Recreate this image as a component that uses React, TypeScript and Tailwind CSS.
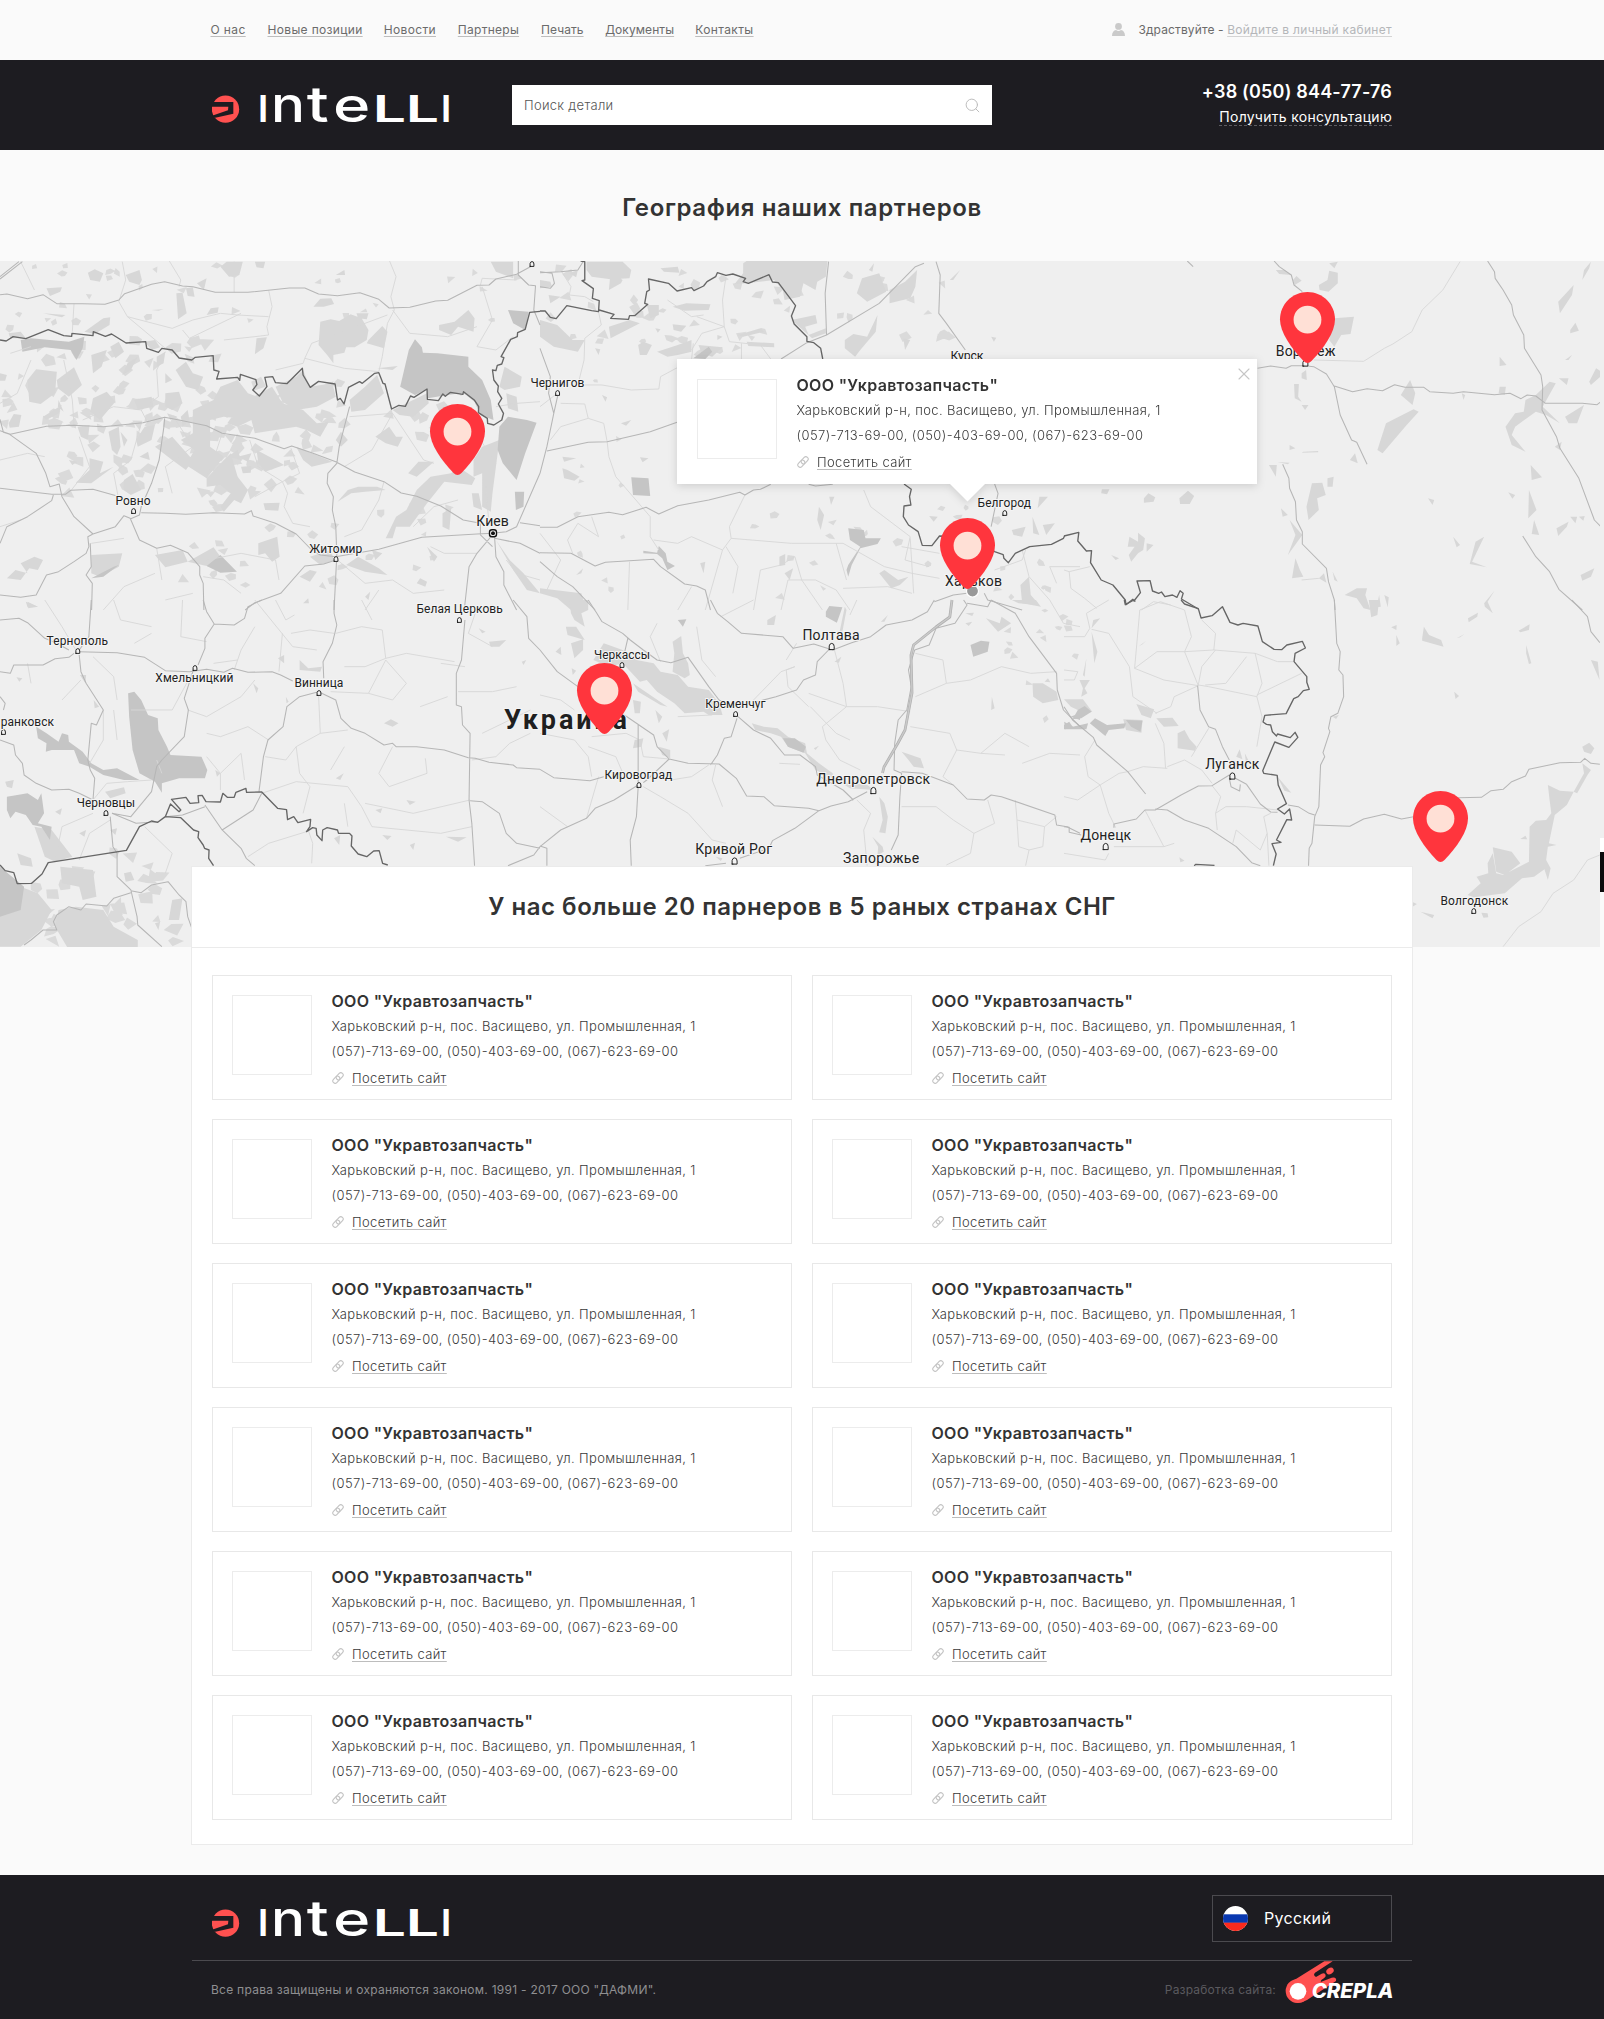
import { Search, X } from "lucide-react";

/* ------------------------------------------------------------------ */
/* Data                                                                */
/* ------------------------------------------------------------------ */

const navItems = [
  { label: "О нас", cls: "tracking-[0.39px] mr-[21.8px]" },
  { label: "Новые позиции", cls: "tracking-[0.34px] mr-[21.2px]" },
  { label: "Новости", cls: "tracking-[0.33px] mr-[21.8px]" },
  { label: "Партнеры", cls: "tracking-[0.28px] mr-[22px]" },
  { label: "Печать", cls: "tracking-[0.05px] mr-[21.6px]" },
  { label: "Документы", cls: "tracking-[0.08px] mr-[21.1px]" },
  { label: "Контакты", cls: "tracking-[0.38px]" },
];

const partner = {
  name: 'ООО "Укравтозапчасть"',
  address: "Харьковский р-н, пос. Васищево, ул. Промышленная, 1",
  phones: "(057)-713-69-00, (050)-403-69-00, (067)-623-69-00",
};
const partners = Array.from({ length: 12 }, () => partner);

interface Tile {
  x: number;
  y: number;
  light: string;
  dark: string;
  thin: string;
  road: string;
  border: string;
}

/* Each tile is digitised on its own grid and scaled into the map. */
const tiles: Tile[] = [
  {
    x: 0,
    y: 0,
    light:
      "M930,185 960,178 985,183 1018,163 1050,175 1070,210 1065,240 1030,262 1005,262 1000,278 968,285 968,310 950,285 925,255z M1070,240 1110,198 1125,215 1115,265 1065,250z M910,140 930,116 962,115 970,132 940,140z M745,235 775,232 765,265 740,283z M512,100 530,98 542,160 517,178z M600,165 612,145 635,142 632,158z M640,20 658,5 705,5 695,45 665,50z M740,5 770,5 765,25 745,22z M135,85 180,82 175,95 145,108z M255,38 275,28 300,40 290,65 262,60z M365,45 405,30 412,60 405,75 375,65z M540,85 560,82 565,110 545,108z M572,70 600,55 592,90z M245,215 300,175 320,172 318,195 275,222z M1275,195 1320,185 1360,150 1378,175 1375,215 1330,200 1310,225 1275,210z M1425,5 1490,5 1490,55 1440,35z M25,220 60,215 75,235 30,235z M80,360 105,328 165,335 160,400 118,432 85,425z M165,360 215,322 238,375 200,410 168,385z M265,285 310,270 295,320 270,340z M320,260 345,245 360,275 335,295z M370,310 400,290 380,330 355,345z M270,415 310,395 335,425 290,480 262,455z M25,490 40,462 62,465 55,500 28,503z M125,470 180,435 170,460 135,480z M315,515 345,500 350,560 340,585 325,570z M395,540 420,500 450,495 440,540 400,560z M480,400 520,395 530,430 500,450 480,440z M510,330 540,305 560,340 590,350 575,390 540,380z M455,290 480,275 475,310 455,320z M560,450 620,420 640,380 690,360 720,400 760,415 740,455 690,475 650,470 610,480 610,560 650,590 600,655 540,615 565,570 525,540 560,520z M700,430 790,380 820,430 880,450 920,490 955,485 930,530 890,510 860,500 800,510 740,520 730,480 690,500 660,490z M800,380 860,350 880,330 900,380 965,370 975,410 920,440 860,450 820,425z M1015,420 1060,380 1095,345 1115,400 1060,450 1020,455z M1140,450 1240,400 1245,430 1200,470 1160,465z M860,560 930,590 965,605 905,620 880,600z M690,590 730,580 720,605z M745,570 800,600 825,615 770,635 750,610z M650,600 670,580 690,650 720,690 700,730 680,720 650,755 640,740 670,700 640,675 600,680 600,655z M260,595 300,605 290,640 330,620 265,670 220,668 260,630z M360,660 385,642 410,690 380,705 358,690z M975,540 990,515 1010,540 990,560z M1090,530 1130,500 1150,530 1170,530 1155,560 1120,550z M980,725 1010,690 1040,680 1095,680 1120,690 1060,695 1020,700z M765,730 812,728 808,752 770,750z M1120,835 1150,770 1180,750 1210,690 1250,650 1310,640 1330,620 1380,655 1370,675 1290,665 1240,730 1190,800 1150,800 1140,835z M1185,640 1215,605 1260,605 1210,650z M1375,600 1400,560 1450,540 1440,620 1430,700 1425,755 1400,740 1400,640 1375,650z M1285,760 1310,745 1305,810 1285,800z M1370,700 1390,700 1400,750 1375,740z M750,850 805,830 812,890 790,905 770,880 750,885z M265,885 355,880 345,920 290,950 265,940z M450,885 530,870 545,905 480,922z M545,905 620,862 640,890 610,920z M20,955 45,930 80,940 60,910 100,890 125,900 110,930 85,925 60,960z M900,890 960,870 970,900 930,915z M1005,915 1040,890 1100,925 1125,945 1060,935z M1080,870 1110,880 1090,900z M870,950 900,930 920,935 900,965z M1210,970 1220,955 1240,965 1235,980z M1440,840 1480,900 1520,940 1568,1000 1530,990 1490,930z M1450,380 1465,320 1515,350 1510,380 1465,390z M1470,400 1500,410 1505,455 1475,445z M170,420 185,455 168,440z M0,340 20,345 15,362 0,362z M200,600 225,605 210,615z M125,160 190,165 180,172z M525,470 545,450 550,480 530,500z M440,150 475,148 460,152z M975,45 1000,30 1002,45z M485,460 515,470 495,480z M350,515 370,540 360,560z M700,620 730,618 728,638 705,640z M1095,325 1155,318 1140,330z M660,590 690,570 700,600z M1260,905 1240,860 1270,890z M405,590 430,575 435,600z M420,245 450,240 465,262 440,270z M600,170 570,190z M1035,160 1070,160 1065,178 1040,175z M480,340 500,360 480,370z M80,1025 110,1040 82,1045z M1060,1010 1075,995 1070,1020z M880,1030 895,1015 897,1030z M450,560 500,530 560,600 540,630 500,600z M390,420 440,410 445,440 400,450z M225,500 260,495 255,540 235,530z",
    dark: "M60,240 90,235 200,245 245,230 240,265 222,300 205,270 130,262 65,275z M1187,270 1205,238 1225,262 1228,278 1270,280 1360,290 1360,320 1400,360 1425,420 1433,480 1395,465 1378,425 1345,398 1300,405 1242,415 1240,387 1205,405 1162,380z M1450,500 1475,470 1530,480 1558,488 1525,580 1500,660 1460,610 1445,570z M1475,150 1535,155 1525,210 1490,190z M265,955 330,920 345,915 300,950z M600,918 640,885 688,935 640,938z M1495,695 1522,695 1520,740 1498,750z",
    thin: "M60,5 100,90 M355,5 365,60 345,125 370,170 480,265 M490,0 525,60 520,80 M780,90 790,140 775,200 780,225 740,230 650,240 M1130,0 1150,50 1135,110 1145,150 1125,190 1110,290 1100,335 M885,295 1000,325 1100,335 M885,295 905,250 1060,190 1125,165 M480,275 455,330 460,410 410,450 M185,300 210,420 215,495 M0,600 80,580 130,590 M645,520 620,600 600,650 M410,490 380,600 330,640 345,720 M845,565 870,640 820,665 835,700 825,740 850,790 900,800 M820,665 740,710 M1115,665 1100,720 1050,810 1000,830 M1140,460 1230,600 1260,610 M0,800 60,780 M265,850 360,835 M455,865 470,960 M600,900 700,880 800,900 810,960 M700,1000 650,960 590,950 M980,900 1060,970 1140,960 1200,1000 1290,990 M1060,1050 1100,990 M300,1050 360,980 450,940 M560,1000 480,1020 M1385,880 1290,880 1250,860 M1500,60 1400,55 1395,75 M1400,80 1430,180 1385,260 1440,270 1490,230 M1140,150 1190,220 1300,230 1385,200 M1440,440 1500,430 1568,425 M215,130 210,215 M680,5 680,97 M370,170 500,205 560,180 640,160 690,165 780,170 M530,210 550,235 700,160 M885,295 880,310 800,330 M230,530 260,620 200,700 M510,480 560,560 480,620 500,700 M725,540 750,620 820,665 M1200,800 1260,740 1330,720 M1410,680 1420,790 M1000,620 1080,570 1140,460 1080,465 1015,470 M240,480 330,440 410,450 430,490 M30,280 90,260 M90,300 50,400 0,430 M1360,440 1395,540 1440,610 M1568,960 1500,940 1470,900",
    road: "M0,104 20,102 80,116 125,104 165,131 240,131 305,133 345,120 362,101 440,73 478,65 530,78 560,80 625,97 720,97 840,84 885,84 925,102 980,107 1045,98 1100,118 1130,144 1190,142 1265,123 1300,121 1385,76 1420,75 1440,57 1500,43 1540,20 M1505,0 1505,45 1535,75 1555,77 1550,150 1568,195 M0,478 10,517 28,523 105,580 133,640 145,680 172,672 180,710 215,770 270,822 M0,512 30,523 135,499 215,496 300,500 415,488 478,472 520,480 600,497 645,520 740,535 825,566 847,558 905,578 975,605 1030,636 1115,665 1165,699 1210,709 1280,738 1345,780 1395,790 M478,475 476,500 462,600 440,670 410,740 405,765 378,777 M0,685 150,703 190,703 205,691 270,688 340,708 M155,705 150,722 80,770 20,800 0,850 M270,822 335,800 360,767 378,775 405,840 455,865 495,856 545,878 580,920 580,945 590,970 592,1050 M410,758 480,760 540,763 620,758 710,762 730,752 735,768 800,790 860,822 905,870 930,885 975,890 1100,868 1225,832 1385,822 1430,820 1470,815 1500,800 1568,640 M270,822 255,830 258,860 250,880 215,905 170,935 135,945 105,1005 60,1012 0,1005 M262,850 265,920 250,945 268,970 266,1050 M1015,440 985,560 978,610 952,640 950,670 968,710 965,750 975,800 978,885 970,1050 M975,900 940,912 885,918 815,1000 740,1028 712,1050 M1432,822 1385,880 1362,920 1348,1050 M1436,830 1440,890 1463,935 1463,975 1500,1050 M1436,835 1510,850 1568,880 M1510,788 1568,797 M1395,790 1395,825 1430,860 M0,50 55,5 M0,57 65,5",
    border:
      "M0,240 18,243 38,230 75,236 140,209 185,227 208,229 209,220 270,227 271,215 306,229 324,222 366,249 423,245 426,265 460,277 470,265 500,270 520,294 557,300 567,292 619,287 621,330 636,334 629,357 690,352 696,361 698,343 743,359 746,374 734,390 753,408 775,380 769,352 792,350 800,368 833,371 878,325 880,345 901,382 925,364 973,372 980,420 988,415 999,432 1012,382 1044,365 1052,370 1088,340 1100,338 1112,370 1118,372 1137,447 1158,436 1177,439 1192,408 1202,412 1240,387 1241,418 1273,422 1286,402 1293,409 1308,397 1344,403 1346,395 1378,421 1390,440 1389,458 1415,475 1416,490 1434,495 1457,480 1462,460 1447,432 1457,415 1445,395 1447,378 1434,360 1430,330 1440,332 1444,316 1457,312 1463,293 1455,290 1483,238 1502,230 1503,218 1525,208 1538,157 1568,154",
  },
  {
    x: 540,
    y: 0,
    light:
      "M135,5 240,5 265,30 260,55 205,58 150,50 135,30z M590,10 600,3 835,3 830,50 805,65 800,90 765,70 755,110 710,120 705,90 680,60 600,70 565,72 590,40z M0,180 50,195 95,240 130,240 110,275 40,260 0,230z M385,140 425,130 495,133 490,150 420,152z M310,135 345,135 345,165 320,175z M200,200 260,180 290,190 205,235z M340,275 400,255 440,240 440,275 400,285 370,290z M460,255 530,262 500,290 470,280z M285,255 300,245 325,255 310,285 290,285z M575,225 640,205 650,215 590,230z M600,245 680,250 680,262 605,258z M730,180 800,165 805,190 770,200 780,225 830,205 830,220 790,235z M885,240 910,222 950,230 980,165 975,215 930,270 915,290 885,265z M935,55 985,40 1005,95 950,125 920,100z M1015,90 1060,65 1095,30 1090,80 1075,115 1015,130z M1190,60 1220,30 1200,60z M1055,235 1075,240 1060,270z M0,985 120,1000 135,1050 90,1050 50,1015 0,1000z M65,625 80,630 115,650 100,662 70,655z M840,710 855,710 845,735z M810,740 825,765 815,810 805,780z M1395,975 1420,950 1425,1005 1455,1040 1400,1030z M985,940 1000,930 1040,960 1070,950 1045,975 1020,985z M695,890 712,882 712,915 695,918z M105,945 125,925 120,940z M710,940 735,925 725,960z M1450,710 1475,710 1445,745z M1430,770 1450,825 1432,820z M1460,795 1495,790 1470,825z M1370,810 1410,800 1400,830 1375,825z M465,910 480,905 475,940z M350,25 400,20 405,38 360,35z M0,60 30,65 35,80 0,85z M25,105 60,110 30,130z M85,40 110,30 105,52z M385,193 425,197 410,215 388,210z M515,225 530,230 515,240z M160,265 175,268 170,285z M180,405 195,412 190,425z M235,490 265,480 250,497z M290,592 315,595 298,607z M335,205 350,208 342,218z M205,35 240,60 235,70 200,90z M1310,230 1325,233 1318,245z M970,10 965,35 955,30z M65,590 105,595 70,605z M1130,768 1155,770 1143,785z",
    dark: "M265,652 315,655 320,708 270,705z M445,295 490,260 500,275 480,297z M300,872 340,878 345,858 365,880 370,905 392,918 370,930 355,895 340,882 300,880z M895,915 930,860 900,840 895,805 940,810 945,835 990,835 980,852 930,865 905,915 895,950 890,930z",
    thin: "M60,30 90,80 85,105 130,110 155,125 M170,155 178,195 130,235 128,300 110,375 180,375 265,390 345,387 350,350 440,300 445,250 M540,50 530,120 535,200 550,245 640,255 670,297 M455,170 535,200 470,220 440,270 M370,120 440,170 475,165 M60,430 130,432 140,475 185,490 195,545 M140,475 60,500 30,540 M195,545 200,590 220,650 295,740 320,770 320,830 345,870 M595,705 550,800 555,835 530,870 480,1050 M555,835 730,850 880,850 1000,920 1080,940 1160,955 M940,690 960,740 1075,830 1060,900 1130,920 M150,770 170,830 110,790 80,840 95,880 M700,1050 720,960 800,960 860,990 900,1050 M540,860 575,920 560,1000 M620,1050 640,930 700,915 740,890 M1080,1000 1010,980 880,985 M1075,835 1085,1000 M1320,930 1400,900 1410,870 M1500,970 1480,920 1568,920 M255,1050 260,905 M585,250 585,297 M530,870 440,830 400,850 330,840 M860,850 890,960 M740,890 760,960 820,1050 M400,1050 440,980 M0,820 60,900 20,990 M1160,880 1050,860 M1400,870 1420,950 1480,1020 M50,400 0,440",
    road: "M0,38 60,35 110,30 125,5 M0,80 30,85 42,70 35,40 0,35 M838,5 828,100 832,225 775,248 700,297 M1150,5 1162,45 1158,160 1180,190 1235,270 M0,265 30,350 25,400 40,460 20,560 0,640 M53,400 40,460 M20,573 140,547 195,545 320,515 398,487 M0,802 50,802 110,770 200,757 240,764 308,742 345,762 400,737 490,720 580,697 595,705 620,690 640,688 670,673 M780,673 800,678 850,673 M0,878 90,880 160,918 190,907 330,898 350,920 420,972 455,978 480,990 495,1050 M0,905 50,950 95,980 160,1050 M1145,1025 1200,1005 1240,1000 M1310,800 1330,700 1320,672 M1290,1000 1300,1020 1400,1050 M832,225 985,130 1090,20 1115,10",
    border:
      "M118,3 130,5 130,60 122,62 155,86 152,115 172,122 170,155 150,152 78,137 47,176 30,172 15,153 0,153 M172,150 215,163 205,175 257,178 260,167 275,167 313,133 304,130 310,95 318,90 315,57 373,70 398,93 440,83 447,92 475,78 485,65 510,50 515,38 540,46 560,42 597,55 590,65 605,70 665,44 675,66 692,68 742,137 730,168 738,192 775,230 775,244 795,248 815,265 821,297 M1057,672 1078,688 1073,710 1077,735 1057,738 1055,770 1070,795 1098,815 1110,856 1138,857 1160,828 1240,830 1320,875 1345,884 1347,895 1360,908 1380,880 1422,860 1485,853 1520,835 1523,828",
  },
  {
    x: 1064,
    y: 0,
    light:
      "M740,75 765,60 770,32 795,38 795,70 768,95 742,90z M770,10 795,5 785,25z M785,175 842,170 832,222 805,225 785,260 770,240z M615,30 640,30 660,45 625,42z M665,60 675,48 690,62 670,75z M1005,360 1020,400 1012,435 978,405z M935,490 1015,448 1030,455 995,495 925,580 910,570z M1282,500 1310,460 1335,455 1340,420 1370,405 1410,365 1428,370 1390,440 1440,490 1400,465 1370,455 1310,500 1300,525 1340,575 1300,555z M1455,470 1510,435 1490,490 1465,490z M1265,380 1283,380 1280,405 1262,400z M1265,290 1285,315 1265,318z M720,670 750,668 760,705 735,715 740,750 710,780 704,740z M765,655 783,650 780,680 765,680z M595,615 618,615 615,650z M668,372 682,372 680,410 690,425 670,415z M690,435 710,435 700,450z M695,575 738,573 738,577 690,578z M655,555 672,565 655,570z M830,600 845,580 853,610z M630,745 650,765 635,770z M655,780 692,825 650,885 672,825z M672,895 685,930 695,950 662,955z M740,955 755,940 762,968z M815,1005 850,985 880,985 875,1005 890,1050 870,1045 850,1015z M915,1005 920,1040 908,1042z M930,1005 943,1012 940,1042z M1220,1030 1250,992 1230,1025 1245,1060 1222,1040z M1355,615 1388,652 1358,660z M1350,690 1372,750 1348,775z M1365,780 1380,825 1358,822z M1430,805 1465,785 1460,800 1435,828z M1470,770 1490,770 1485,790z M1495,770 1512,768 1508,782z M1435,125 1480,75 1475,105 1440,160z M1470,210 1485,188 1495,212 1470,220z M1510,30 1530,5 1525,25 1505,60z M1525,365 1545,325 1568,340 1530,375z M1195,845 1220,830 1185,905 1228,922 1178,912z M1130,830 1150,855 1140,862z M1500,945 1540,925 1530,950 1505,962z M1057,715 1075,720 1070,735z M1290,697 1310,705 1302,716z M185,860 190,830 215,845 215,818 235,835 230,870 215,880 195,905 188,885 205,860z M240,850 260,855 240,875z M137,885 160,895 150,900z M110,688 132,688 125,703 108,700z M232,715 245,700 265,712 260,725 232,728z M335,715 360,692 378,708 365,732 337,732z M690,340 703,330 705,360 690,355z M620,606 655,608 650,613z M780,935 795,965 785,960z M1437,355 1465,355 1460,375z M1425,560 1445,545 1440,570z M1455,300 1475,285 1465,300z M1155,400 1165,405 1160,420z",
    dark: "",
    thin: "M725,300 870,304 930,265 955,252 1010,215 1040,150 1100,90 1150,5 M0,930 15,935 20,985 60,1015 95,1045 M15,935 75,920 M225,1050 260,1025 310,1035 M690,960 740,955",
    road: "M358,3 375,20 M610,3 625,20 660,45 668,75 692,95 M562,325 600,318 645,325 660,317 700,317 725,320 762,342 785,380 802,465 835,540 850,547 880,613 M785,378 838,395 880,386 925,392 960,374 990,382 1045,382 1062,395 1130,400 1160,395 1250,404 1295,400 1327,416 1345,405 1370,408 1398,430 1505,430 1548,434 1568,418 M1230,3 1250,35 1252,55 1275,90 1300,135 1305,165 1335,225 1337,265 1385,345 1390,380 1388,450 1430,530 1440,565 1495,655 1540,780 1568,810 M635,613 653,655 655,685 672,725 675,780 692,815 692,852 762,925 768,965 785,1020 787,1050 M1332,828 1370,890 1410,935 1437,988 1505,1050",
    border:
      "M0,828 43,817 40,843 65,873 80,872 77,908 108,960 142,975 178,1020 180,1034 200,1018 203,1023 222,998 212,963 250,962 257,993 275,1000 283,996 293,1010 315,1005 328,1012 337,992 346,1000 341,1017 390,1047",
  },
  {
    x: 0,
    y: 340,
    light:
      "M100,680 150,690 210,770 160,785 130,770z M0,830 60,860 110,880 150,930 120,990 60,1040 0,1040z M170,930 220,920 300,930 330,980 400,1020 400,1050 200,1050 160,980z M175,800 270,810 280,890 240,900 230,860 180,850z M305,575 360,562 365,580 320,595z M500,900 530,895 520,960 490,960z M360,820 380,815 390,840 365,845z M230,700 250,690 245,710z M75,5 110,20 80,22z M870,180 895,205 935,200 930,215 870,210z M807,175 825,165 825,190z M1390,85 1410,95 1400,100z M1420,125 1470,120 1450,140 1425,140z M1105,350 1120,340z M1115,370 1135,358 1157,370 1140,380z M1515,185 1528,180 1520,195z M735,250 750,265 745,280z M975,535 998,520 988,540z M1295,710 1355,712 1330,725z M1190,735 1205,728 1200,750z M970,715 988,705 985,735z M1110,705 1137,708 1125,720z M1180,600 1207,605 1190,615z M232,225 250,225 248,250z M272,300 288,320 275,325z M625,510 640,520 630,530z M450,970 465,965 460,990z M160,635 180,625 175,645z M320,690 340,685 335,705z M15,545 40,540 35,565 20,560z M1090,630 1110,625 1105,640z M830,290 838,305 832,310z M48,232 65,235 56,245z M50,760 90,775 95,800 60,795z",
    dark: "M372,280 390,275 410,300 430,345 458,355 460,390 485,440 495,465 585,470 602,510 595,535 520,535 470,550 470,578 450,545 405,520 385,450 375,350z M105,380 135,400 170,425 180,400 198,405 200,425 240,455 265,490 300,510 340,505 405,540 360,540 300,525 260,500 230,490 215,450 150,450 133,455 135,430 110,415z M20,590 80,580 110,600 120,580 128,640 110,670 150,680 145,720 120,680 95,675 75,645 45,635 30,655 20,630z M0,800 70,860 60,930 0,950z",
    thin: "M330,0 350,60 440,80 M530,0 525,110 600,125 M390,130 440,100 M740,80 700,150 680,210 M800,0 830,60 855,45 M740,0 850,140 920,150 M820,100 810,215 M845,100 900,90 970,100 M975,100 1050,80 1110,90 1120,175 1180,160 1320,185 M1120,175 1060,200 1000,200 M1120,180 1070,280 960,275 M1070,280 1140,300 1180,250 1120,180 M1330,275 1430,275 1500,260 M925,285 930,400 860,440 830,480 770,470 M930,400 1010,390 M860,440 870,520 900,560 880,640 M1140,440 1100,520 1130,560 1240,520 1235,475 M960,510 1000,440 M760,580 860,545 1010,560 1050,620 M1365,600 1200,640 1060,610 M1050,620 1080,680 1280,700 1370,680 M780,420 720,380 640,410 600,400 M545,330 600,350 700,290 740,240 M560,215 500,330 380,330 M300,330 300,420 260,490 M270,600 310,550 370,545 440,540 M600,470 640,520 640,570 M640,520 700,460 710,540 M270,170 330,230 340,300 M80,190 90,250 M235,240 180,300 M895,690 908,730 905,790 M890,695 780,730 720,770 M1370,480 1440,470 1480,430 1540,400 M1380,40 1360,100 1430,140 M1400,400 1540,330 M130,0 180,80 220,150 M1050,0 1080,60 M620,190 690,180 M330,330 340,420 M455,480 470,520 M270,640 180,680 160,780 M320,660 260,700 230,780 M420,680 500,760 480,820 M1350,200 1280,190 M1220,320 1300,290 M1000,610 1010,680",
    road: "M0,60 55,55 80,68 130,115 165,130 200,150 M265,0 258,110 230,150 M230,155 340,158 420,172 480,212 550,215 600,208 650,217 675,205 720,217 790,215 815,225 850,243 M215,160 200,172 160,176 125,195 40,195 30,220 0,215 M230,165 235,215 250,250 300,330 280,375 265,370 255,480 262,510 275,535 270,600 M590,0 600,35 622,72 680,75 710,55 720,20 760,0 M622,72 595,115 595,145 575,195 M560,215 535,295 547,330 535,410 470,480 455,500 440,575 380,650 325,640 M970,0 970,40 978,75 965,130 938,185 940,235 M925,275 870,290 833,320 822,380 778,420 765,470 752,575 M925,275 975,300 990,355 1020,385 1060,400 1115,435 1140,430 1150,440 1210,440 1290,450 1360,473 1380,475 1420,487 1490,495 1500,503 1568,508 M1350,60 1340,180 1325,220 1325,315 1340,320 1343,375 1365,400 1362,600 1370,670 1378,797 M1490,0 1530,50 1535,115 1568,150 M1365,602 1400,605 1450,640 1470,700 1500,730 1568,745 M1475,797 1550,765 1568,740 M0,290 15,310 10,330 M0,420 40,435 45,465 65,490 70,525 105,550 150,570 200,568 230,580 270,600 M320,650 328,740 340,760 340,830 380,870 398,950 400,975 470,1040 M380,872 410,878 440,855 488,845 520,885 540,905 545,950 557,985 M380,878 330,895 310,918 250,912 235,930 200,920 165,945 155,965 165,990 125,990 90,1020 70,1035 M325,640 395,670 460,665 M595,620 530,645 480,650 M595,615 645,690 700,745 715,775 740,797 M760,580 735,630 690,660 645,690",
    border:
      "M480,650 495,612 520,635 525,630 498,598 540,592 552,610 577,608 575,587 587,586 598,605 640,606 647,580 660,592 680,592 685,577 714,565 716,577 760,576 806,625 832,629 835,659 853,650 865,668 902,658 900,680 890,695 908,683 918,685 920,705 935,722 937,690 950,683 980,690 983,700 1015,700 1022,708 1020,738 1040,762 1065,770 1085,753 1101,752 1111,790 1126,795 M480,650 525,653 562,690 577,695 575,713 590,735 594,745 607,750 606,775 620,797 M480,650 458,667 440,663 405,680 367,751 140,788 122,822 92,850 50,851 40,818 15,812 0,795",
  },
  {
    x: 540,
    y: 340,
    light:
      "M155,180 185,130 240,150 280,180 330,190 350,215 400,225 430,260 490,270 520,310 530,345 490,345 475,335 420,340 390,310 340,275 310,240 290,245 240,190 200,200z M385,125 410,108 415,160 430,190 435,225 420,235 385,215 390,160z M75,80 105,80 130,120 80,105z M85,0 140,0 140,30 120,40 130,80 100,60 90,40z M90,130 125,118 125,150 100,175z M45,155 60,140 62,165z M270,300 293,305 290,340 275,340z M270,250 370,320 350,315 285,275z M335,330 355,350 345,370z M355,400 375,388 368,425z M345,440 378,450 378,475 355,465z M275,420 300,415 295,440 270,445z M615,370 650,380 690,385 720,410 770,430 775,460 810,490 850,520 850,535 800,510 770,460 720,440 700,410 670,400 625,390z M870,545 950,555 970,570 900,565z M985,590 1000,610 1010,650 1003,700 985,697 995,660z M965,710 995,740 998,755 980,765 982,740z M1050,455 1105,475 1115,505 1085,500 1070,480z M660,60 685,45 680,75 660,75z M870,95 885,20 890,30 878,95z M990,65 1010,45 1000,65z M1295,55 1335,70 1340,50 1368,70 1330,95z M1370,0 1440,0 1450,15 1390,10z M1430,250 1460,250 1500,275 1505,300 1460,310 1432,290z M855,185 875,170 868,188z M1312,290 1320,325 1310,330z M92,205 105,212 95,225z M795,445 810,437 800,450z M510,770 530,775 525,783z M1465,245 1475,235 1482,247z M1235,40 1260,38 1255,48z M1235,70 1255,65 1245,78z",
    dark: "M830,35 840,18 878,22 862,68 830,50z M1250,135 1280,122 1305,125 1300,155 1258,170z M1540,350 1568,340 1568,360z M1522,365 1548,380 1525,388z M400,60 425,58 415,80z M705,415 740,415 772,440 765,458 720,440z",
    thin: "M740,200 715,210 720,260 780,320 M715,180 745,130 M620,300 700,215 740,200 M525,50 620,0 M455,80 470,180 510,230 M350,185 320,110 340,70 M785,320 860,400 900,420 M780,280 890,320 820,380 830,420 870,480 930,510 M890,320 980,320 1075,335 M855,150 880,250 890,320 M1090,160 1170,180 1180,250 1090,290 M1180,250 1250,240 1340,200 1425,220 1500,215 M1075,380 1190,400 1210,450 1170,530 1200,555 M1210,450 1280,460 1350,465 M1400,490 1480,460 1568,465 M0,285 60,300 100,330 M150,410 250,400 290,420 300,470 375,477 M0,400 100,420 140,470 150,530 M140,440 220,470 245,530 M0,620 80,680 M300,560 350,590 430,640 500,720 540,730 M510,495 500,540 530,620 M490,495 440,530 380,540 M1050,620 1150,620 1200,660 1260,700 1320,670 1300,600 M1380,600 1385,660 1465,680 1500,650 M1260,700 1250,760 1180,795 M1385,660 1390,740 1420,750 1410,797 M1465,680 1460,740 1420,750 M920,600 960,640 940,690 950,797 M695,490 755,493 M900,45 920,0 M1480,0 1520,70 1568,80 M400,350 500,345 M170,530 135,655 M1280,460 1350,400 1420,440",
    road: "M140,0 165,40 180,65 240,100 262,120 300,150 340,180 380,188 430,172 490,260 520,300 565,325 M255,115 245,160 M495,0 515,40 545,65 585,100 705,110 735,145 795,132 850,150 905,128 960,110 1005,75 1080,60 1125,35 1145,0 M838,150 805,185 800,225 765,240 745,270 685,290 630,305 M575,350 620,390 670,415 710,465 755,465 800,500 805,525 880,570 910,600 M572,355 555,410 535,415 515,465 495,495 M0,508 40,533 145,542 185,530 M285,375 285,550 M245,345 330,405 340,440 375,477 430,490 520,492 570,535 600,588 650,590 680,617 780,625 810,632 845,618 895,605 950,575 M810,632 740,685 675,722 665,745 580,775 M540,790 480,797 M375,477 310,540 300,548 M285,555 215,600 160,625 135,655 60,690 0,740 M0,738 20,745 20,797 M285,560 280,650 262,720 265,797 M0,150 50,215 110,260 M1310,0 1380,40 1420,110 1500,220 1502,270 1520,330 1568,380 M1230,0 1240,15 1205,70 1150,85 1130,135 1088,150 1070,210 1078,260 1065,330 1040,360 1030,430 1028,510 1050,520 1045,590 1040,705 1020,750 M1050,515 1110,520 1200,555 1240,597 1290,600 1310,585 1340,590 1495,645 1500,675 1530,680 1568,700 M1240,10 1300,20 1310,0",
    border: "",
  },
  {
    x: 1064,
    y: 340,
    light:
      "M0,298 55,298 82,335 60,340 20,320z M210,312 262,328 252,355 225,345z M268,355 315,353 333,378 290,380z M330,400 350,390 365,418 385,440 380,452 330,445z M85,60 105,55 80,85z M80,95 97,155 88,190 85,155z M65,175 60,230 55,225z M45,240 75,240 60,265 68,280 50,290 55,265z M172,358 228,360 225,398 180,390z M1405,555 1440,572 1480,575 1460,615 1425,645 1408,730 1430,735 1405,740 1400,780 1413,805 1405,840 1395,808 1365,830 1330,835 1280,880 1190,892 1172,885 1210,850 1198,830 1232,820 1230,790 1245,760 1255,820 1275,825 1350,785 1352,680 1370,662 1400,660 1415,640 1410,600z M1480,575 1510,520 1505,490 1530,510 1520,525 1490,580z M1505,440 1525,428 1540,445 1530,462 1510,455z M1040,115 1045,80 1060,105 1095,120 1102,140 1040,122z M965,105 975,130 965,138z M1140,115 1163,102 1150,112z M1133,275 1147,288 1137,297z M885,0 915,0 910,45 892,52z M1173,55 1202,38 1200,50 1175,67z M1320,92 1352,73 1350,90 1325,97z M1342,135 1357,190 1350,192 1342,160z M1530,180 1550,185 1555,240z M620,530 660,578 640,572z M500,470 510,448 518,478z M525,460 535,480 528,485z M1010,905 1025,912 1012,920z M1035,935 1075,945 1070,955z M1212,938 1230,940 1232,952 1218,953z M1325,717 1340,707 1345,718z M335,772 350,782 338,787z M780,350 798,345 790,357z M1245,742 1300,755 1325,790 1280,825 1255,815z M215,140 238,123 228,133z M950,82 966,75 965,90z",
    dark: "M0,375 15,365 25,380 70,370 65,388 0,388z M75,370 90,355 125,375 180,370 175,385 130,390 120,408z M40,330 60,318 80,335 50,355 25,358z M180,360 228,362 222,395 195,380z",
    thin: "M80,88 130,100 190,200 200,290 270,340 M350,155 390,257 M205,205 270,155 350,155 435,150 555,160 575,250 560,290 420,260 390,255 M205,205 290,240 390,257 M215,90 205,205 M215,90 220,30 280,5 350,30 370,110 350,155 M435,150 440,100 400,60 M440,150 400,200 390,255 M555,160 620,185 665,185 M560,290 575,350 565,410 560,440 M560,285 690,220 M390,257 320,290 310,320 265,340 M75,85 60,110 0,110 M75,85 65,40 130,0 M0,210 40,215 30,240 0,240 M90,420 60,470 70,530 105,555 130,640 M105,555 40,600 0,590 M105,555 160,520 185,515 230,500 300,505 M295,505 290,430 265,370 M300,500 350,480 400,510 430,550 M420,385 370,470 M440,640 470,620 530,620 620,630 M430,557 455,590 440,640 445,690 M590,700 580,650 600,640 M130,640 150,683 M145,740 290,740 320,730 M235,630 260,680 290,740 M490,730 500,690 570,750 590,700 M130,760 120,780 0,760 M1556,765 1520,780 1480,840 1420,880 1385,935 1320,980 1275,1040 M530,170 500,210 470,250 410,255 M590,700 595,797",
    road: "M785,0 792,130 802,155 798,210 810,225 812,290 795,340 775,350 768,385 772,395 752,458 757,470 745,495 740,620 728,650 720,730 712,745 710,797 M728,675 830,679 870,657 930,643 980,657 1015,650 M1145,593 1212,592 1240,572 1275,568 1300,545 1340,528 1350,508 1440,488 1500,487 1512,475 1530,490 1556,493 M1475,0 1520,50 1530,95 1556,128 M388,257 395,330 420,380 440,388 460,440 480,480 M530,553 570,612 600,636 620,637 M650,615 680,620 712,640 728,645 M0,320 25,360 85,412 95,435 185,515 237,582 M145,683 145,672 210,657 235,630 265,630 340,585 390,558 430,557 480,525 530,553 M265,627 300,630 350,660 420,685 500,740 545,788 570,797 M0,680 15,682 15,697 50,705 M480,535 485,560 510,573 512,553",
    border:
      "M175,0 178,14 203,0 207,5 M340,0 350,12 390,26 398,54 430,47 460,20 482,67 505,75 520,70 563,78 576,125 610,148 632,149 647,135 692,124 701,144 671,160 668,185 705,230 705,247 712,268 695,272 680,290 667,296 645,341 583,346 578,366 588,373 600,375 605,395 617,408 620,402 657,413 671,397 679,412 653,442 612,426 577,512 580,520 619,526 622,555 646,611 620,627 640,642 655,627 661,660 647,659 617,720 630,727 604,731 616,762 608,797 M378,797 383,793 437,796",
  },
];

/* Scattered woodland patches: x range, y range, count, patch size. */
const woods: [number, number, number, number, number, number][] = [
  [5, 215, 338, 430, 55, 11],
  [60, 320, 395, 500, 70, 11],
  [200, 480, 380, 450, 35, 11],
  [5, 520, 264, 330, 32, 7],
  [180, 480, 500, 590, 26, 8],
  [545, 830, 268, 355, 36, 9],
  [830, 960, 265, 340, 14, 9],
  [560, 670, 370, 600, 10, 6],
  [740, 1060, 500, 600, 26, 7],
  [1000, 1120, 570, 720, 16, 7],
  [0, 185, 850, 945, 40, 13],
];

function scatter(): string {
  let seed = 7;
  const rnd = () => {
    seed = (seed * 16807) % 2147483647;
    return seed / 2147483647;
  };
  return woods
    .flatMap(([x0, x1, y0, y1, n, size]) =>
      Array.from({ length: n }, () => {
        const cx = x0 + rnd() * (x1 - x0);
        const cy = y0 + rnd() * (y1 - y0);
        const corners = 3 + Math.floor(rnd() * 3);
        const turn = rnd() * 6.28;
        const pts = Array.from({ length: corners }, (_, k) => {
          const a = turn + (k / corners) * 6.28;
          const r = size * (0.3 + rnd() * 0.6);
          return `${(cx + Math.cos(a) * r).toFixed(1)},${(cy + Math.sin(a) * r * 0.8).toFixed(1)}`;
        });
        return `M${pts.join(" ")}z`;
      }),
    )
    .join(" ");
}
const scatteredWoods = scatter();

/* name, left x, baseline y, width, font size */
const labels: [string, number, number, number, number][] = [
  ["Ровно", 115.4, 505.3, 35.1, 12],
  ["Житомир", 309.3, 553.3, 53, 12],
  ["Киев", 476.3, 525.7, 32.4, 14],
  ["Чернигов", 530.5, 387.3, 53.9, 12],
  ["Тернополь", 46.5, 645.3, 61.6, 12],
  ["Хмельницкий", 155.3, 682, 78.2, 12],
  ["Винница", 294.5, 687.3, 48.9, 12],
  ["ранковск", 0.8, 726, 53.2, 12],
  ["Черновцы", 76.8, 807, 58.2, 12],
  ["Белая Церковь", 416.4, 613.2, 86.4, 12],
  ["Черкассы", 594, 659.3, 56.2, 12],
  ["Кременчуг", 705.3, 708.2, 60.3, 12],
  ["Полтава", 802.4, 640, 57.2, 14],
  ["Кировоград", 604.4, 779, 67.8, 12],
  ["Днепропетровск", 816.2, 784, 114, 14],
  ["Кривой Рог", 695.3, 854.2, 76.8, 14],
  ["Запорожье", 843, 863.2, 76.2, 14],
  ["Курск", 950.6, 360, 32.8, 12.5],
  ["Белгород", 977.5, 507, 53.5, 12],
  ["Харьков", 945, 586, 57, 14],
  ["Луганск", 1205.2, 769, 54.1, 14],
  ["Донецк", 1080.5, 840, 50.7, 14],
  ["Волгодонск", 1440.4, 905, 67.9, 12],
  ["Воронеж", 1275.8, 356.3, 59.6, 14],
];

/* x, y, radius */
const towns: [number, number, number][] = [
  [133.6, 511, 2.4],
  [336, 559, 2.4],
  [557.6, 393, 2.4],
  [77.8, 651, 2.4],
  [195, 668, 2.4],
  [319, 693, 2.4],
  [3.5, 732, 2.4],
  [106, 813, 2.4],
  [459.4, 620, 2.4],
  [622, 665, 2.4],
  [735.6, 714, 2.4],
  [831.7, 646.5, 3.1],
  [639, 785, 2.4],
  [873.4, 790.5, 3.1],
  [734.6, 861, 3.1],
  [1004.8, 513, 2.4],
  [1232.4, 776, 3.1],
  [1105.7, 846.5, 3.1],
  [1473.8, 911, 2.4],
  [1305.4, 363, 3.1],
  [532, 264, 2.4],
];

/* centre x, top y */
const pins: [number, number][] = [
  [457.5, 404],
  [967.5, 518],
  [1307.5, 292],
  [604.5, 663],
  [1440.5, 791],
];

/* ------------------------------------------------------------------ */
/* Map                                                                 */
/* ------------------------------------------------------------------ */

const highway = "M952,600 949.800,617 936,627 913.600,645 911,655 912,693 905,730 898,743 884,767 882.500,773";

function PartnerMap() {
  return (
    <svg className="block h-[686px] w-[1604px]" viewBox="0 261 1604 686">
      <rect x="0" y="261" width="1600" height="686" fill="#efefef" />
      <rect x="1600" y="261" width="4" height="577" fill="#efefef" />
      <rect x="1600" y="838" width="4" height="14" fill="#ffffff" />
      <rect x="1600" y="852" width="4" height="40" fill="#0b0b0c" />
      <rect x="1600" y="892" width="4" height="55" fill="#fafafa" />
      <clipPath id="land">
        <rect x="0" y="261" width="1600" height="686" />
      </clipPath>
      <g clipPath="url(#land)">
        <path d={scatteredWoods} fill="#dadada" />
        {tiles.map((t, i) => (
          <g key={i} transform={`translate(${t.x} ${t.y + 260}) scale(0.34439 0.33333)`}>
            <path d={t.light} fill="#d7d7d7" />
            <path d={t.dark} fill="#c5c5c5" />
          </g>
        ))}
        {tiles.map((t, i) => (
          <g
            key={i}
            transform={`translate(${t.x} ${t.y + 260}) scale(0.34439 0.33333)`}
            fill="none"
            strokeLinejoin="round"
          >
            <path d={t.thin} stroke="#d7d7d7" strokeWidth="0.9" vectorEffect="non-scaling-stroke" />
            <path d={t.road} stroke="#b6b6b6" strokeWidth="1.05" vectorEffect="non-scaling-stroke" />
            <path d={t.border} stroke="#666666" strokeWidth="1.35" vectorEffect="non-scaling-stroke" />
          </g>
        ))}
        <g fill="none" strokeLinejoin="round">
          <path d={highway} stroke="#b0b0b0" strokeWidth="2.800" />
          <path d={highway} stroke="#cacaca" strokeWidth="1.400" />
        </g>
        {towns.map(([x, y, r], i) => (
          <path
            key={i}
            d={`M${x - r},${y + r} h${0.6 * r} M${x - r * 0.8},${y + r} V${y - r * 0.2} Q${x - r * 0.6},${y - r} ${x},${y - r} Q${x + r * 0.8},${y - r} ${x + r * 0.8},${y} V${y + r}z`}
            fill="#f4f4f4"
            stroke="#1c1c1c"
            strokeWidth="0.95"
          />
        ))}
        <rect x="489.500" y="529.800" width="7" height="7" rx="2.500" fill="#fff" stroke="#111" strokeWidth="1.400" />
        <circle cx="493" cy="533.300" r="2" fill="#111" />
        <circle cx="972.500" cy="591" r="6" fill="#999" stroke="#fff" strokeWidth="1.200" />
        {labels.map(([name, x, y, w, s]) => (
          <text
            key={name}
            x={x}
            y={y}
            textLength={w}
            fontSize={s}
            fontFamily="Roboto, sans-serif"
            fill="#222"
            stroke="#f4f4f4"
            strokeWidth="2"
            paintOrder="stroke"
          >
            {name}
          </text>
        ))}
        <text
          x="504"
          y="729"
          textLength="123"
          fontSize="27"
          fontWeight="700"
          fontFamily="Roboto, sans-serif"
          fill="#1f1f1f"
          stroke="#f4f4f4"
          strokeWidth="2"
          paintOrder="stroke"
        >
          Украина
        </text>
      </g>
      {pins.map(([x, y]) => (
        <g key={x} transform={`translate(${x - 27.5} ${y})`}>
          <path
            d="M27.500,0 C42.700,0 55,12.300 55,27.500 C55,40 44,56 31.500,69 Q27.500,73 23.500,69 C11,56 0,40 0,27.500 C0,12.300 12.300,0 27.500,0z"
            fill="#ff353d"
          />
          <circle cx="27.500" cy="27.700" r="13.900" fill="#ffe0d6" />
        </g>
      ))}
    </svg>
  );
}

/* ------------------------------------------------------------------ */
/* Logos and icons                                                     */
/* ------------------------------------------------------------------ */

/* glyph, x, advance, font size, baseline, weight */
const logoLetters: [string, number, number, number, number, number][] = [
  ["I", 203, 32, 112, 226, 600],
  ["n", 243, 102, 147, 226, 500],
  ["t", 350, 66, 149, 226, 500],
  ["e", 429, 112, 144, 224, 500],
  ["L", 548, 100, 111, 225, 600],
  ["L", 647, 100, 111, 225, 600],
  ["I", 752, 32, 112, 226, 600],
];

function IntelliLogo() {
  return (
    <svg className="block h-[76px] w-[244px]" viewBox="66 60 732 228" aria-label="Intelli">
      <circle cx="106.500" cy="186.500" r="41" fill="#ff5150" />
      <path d="M60,165 H130 V200 L76,212 66,206 114,190 115,179 H60z" fill="#1d1c21" />
      {logoLetters.map(([ch, x, w, s, y, weight], i) => (
        <text
          key={i}
          x={x}
          y={y}
          fontSize={s}
          textLength={w}
          lengthAdjust="spacingAndGlyphs"
          fontFamily="Inter, sans-serif"
          fontWeight={weight}
          fill="#ffffff"
        >
          {ch}
        </text>
      ))}
    </svg>
  );
}

function CreplaLogo() {
  return (
    <svg className="block h-[43px] w-[110px]" viewBox="434 271 330 129" aria-label="Crepla">
      <path
        d="M444,339 L552,272 H577 L524,306 Q517,313 527,319 L544,309 Q556,305 556,317 Q554,322 543,328 L541,334 L574,321 Q590,318 587,331 L500,388 Q480,400 460,394z"
        fill="#ff5150"
      />
      <circle cx="472" cy="361" r="36" fill="#ff5150" />
      <ellipse cx="569" cy="301" rx="12" ry="9" transform="rotate(-35 569 301)" fill="#ff5150" />
      <circle cx="473" cy="362" r="25" fill="#ffffff" />
      <text
        x="514"
        y="383"
        fontSize="60"
        textLength="245"
        lengthAdjust="spacingAndGlyphs"
        fontFamily="Inter, sans-serif"
        fontWeight="800"
        fontStyle="italic"
        fill="#ffffff"
      >
        CREPLA
      </text>
    </svg>
  );
}

function UserIcon() {
  return (
    <svg className="block size-[13px]" viewBox="0 0 13 13" fill="#cacaca">
      <circle cx="6.500" cy="3.400" r="3.400" />
      <path d="M0,13 C0,9.200 1.800,7.400 4,7 Q6.500,8.800 9,7 C11.200,7.400 13,9.200 13,13z" />
    </svg>
  );
}

function ChainIcon() {
  return (
    <svg className="block size-3" viewBox="0 0 12 12" fill="none" stroke="#c3c3c3" strokeWidth="1.1">
      <rect x="3.700" y="2" width="8" height="4.600" rx="2.300" transform="rotate(-47 7.700 4.300)" />
      <rect x="0.300" y="5.400" width="8" height="4.600" rx="2.300" transform="rotate(-47 4.300 7.700)" />
    </svg>
  );
}

/* ------------------------------------------------------------------ */
/* Blocks                                                              */
/* ------------------------------------------------------------------ */

function PartnerInfo() {
  return (
    <>
      <div className="mt-[19px] ml-[19px] size-20 shrink-0 border border-[#ececec] bg-white" />
      <div className="ml-[19.5px] pt-3 whitespace-nowrap">
        <div className="h-[26px] text-[16px] leading-[26px] font-semibold tracking-[0.31px] text-[#333]">
          {partner.name}
        </div>
        <div className="h-[25px] text-[13px] leading-[25px] font-light tracking-[0.35px] text-[#3a3a3a]">
          {partner.address}
        </div>
        <div className="h-[25px] text-[13px] leading-[25px] font-light tracking-[0.41px] text-[#3a3a3a]">
          {partner.phones}
        </div>
        <div className="flex h-[28px] items-center">
          <ChainIcon />
          <a className="ml-[8.5px] text-[13px] leading-[28px] font-light tracking-[0.35px] text-[#3a3a3a] underline decoration-[#bdbdbd] decoration-1 underline-offset-2 [text-decoration-skip-ink:none]">
            Посетить сайт
          </a>
        </div>
      </div>
    </>
  );
}

export default function App() {
  return (
    <div className="w-[1604px] overflow-hidden bg-[#fafafa] font-['Inter',sans-serif]">
      <div className="flex h-[60px] items-center justify-between pr-[212px] pb-px pl-[210.5px] text-[12px]">
        <nav className="flex whitespace-nowrap text-[#6b6b6b]">
          {navItems.map((n) => (
            <a
              key={n.label}
              className={`underline decoration-[#bdbdbd] decoration-1 underline-offset-2 [text-decoration-skip-ink:none] ${n.cls}`}
            >
              {n.label}
            </a>
          ))}
        </nav>
        <div className="flex items-center whitespace-nowrap">
          <UserIcon />
          <span className="ml-[13px] tracking-[0.12px] text-[#6b6b6b]">Здраствуйте -&nbsp;</span>
          <a className="tracking-[0.32px] text-[#b4b6b9] underline decoration-[#d4d4d4] decoration-1 underline-offset-2 [text-decoration-skip-ink:none]">
            Войдите в личный кабинет
          </a>
        </div>
      </div>

      <header className="flex h-[90px] justify-between bg-[#1d1c21] pr-[212px] pl-[212px] text-white">
        <div className="w-[300px] pt-[6.5px]">
          <IntelliLogo />
        </div>
        <div className="mt-[25px] flex h-10 w-[480px] items-center justify-between bg-white pr-[11px] pl-3">
          <span className="pt-px text-[13px] font-light tracking-[0.29px] text-[#555]">Поиск детали</span>
          <Search className="size-[17px] text-[#bcbcbc]" strokeWidth={1.4} />
        </div>
        <div className="flex w-[400px] flex-col items-end pt-[19px] whitespace-nowrap">
          <div className="h-[26px] text-[18px] leading-[26px] font-semibold tracking-[0.19px]">
            +38 (050) 844-77-76
          </div>
          <a className="mt-1 h-[17px] border-b border-dashed border-[#5c5b60] text-[14px] leading-[16px] tracking-[0.29px]">
            Получить консультацию
          </a>
        </div>
      </header>

      <main>
        <h1 className="flex h-[111px] items-center justify-center pt-1 text-[24px] font-semibold tracking-[0.62px] text-[#333]">
          География наших партнеров
        </h1>

        <section className="relative">
          <PartnerMap />
          <div className="absolute top-[98px] left-[677px] h-[125px] w-[580px] drop-shadow-[0_2px_4px_rgba(0,0,0,0.14)]">
            <div className="flex h-full border border-white bg-white">
              <PartnerInfo />
            </div>
            <svg className="absolute top-[124px] left-[272px] h-[19px] w-[37px]" viewBox="0 0 37 19">
              <path d="M0,0 H37 L18.500,18.500z" fill="#ffffff" />
            </svg>
            <X className="absolute top-[4.5px] right-[3px] size-5 text-[#c6c6c6]" strokeWidth={1.3} />
          </div>
        </section>

        <section className="relative mx-auto -mt-[81px] h-[979px] w-[1222px] border border-[#ebebeb] bg-white">
          <h2 className="flex h-[81px] items-center justify-center border-b border-[#ebebeb] text-[24px] font-semibold tracking-[0.54px] text-[#333]">
            У нас больше 20 парнеров в 5 раных странах СНГ
          </h2>
          <div className="grid grid-cols-[580px_580px] gap-x-5 gap-y-[19px] pt-[27px] pl-5">
            {partners.map((_, i) => (
              <article key={i} className="flex h-[125px] border border-[#e8e8e8] bg-white">
                <PartnerInfo />
              </article>
            ))}
          </div>
        </section>
      </main>

      <footer className="mt-[30px] h-[144px] bg-[#1d1c21]">
        <div className="mx-auto flex h-[86px] w-[1220px] justify-between border-b border-[#4b4a4f] px-5">
          <div className="pt-[5.5px]">
            <IntelliLogo />
          </div>
          <button className="mt-5 flex h-[47px] w-[180px] items-center border border-[#4b4a4f] pl-[10px]">
            <svg className="size-[25px]" viewBox="0 0 25 25">
              <clipPath id="flag">
                <circle cx="12.500" cy="12.500" r="12.500" />
              </clipPath>
              <g clipPath="url(#flag)">
                <rect width="25" height="25" fill="#fff" />
                <rect y="8.300" width="25" height="8.600" fill="#0938b0" />
                <rect y="16.700" width="25" height="8.500" fill="#fb2a1d" />
              </g>
            </svg>
            <span className="ml-4 pb-px text-[16px] tracking-[0.35px] text-white">Русский</span>
          </button>
        </div>
        <div className="mx-auto flex h-[58px] w-[1220px] justify-between pl-[19px] text-[12px] whitespace-nowrap">
          <div className="pt-[19px] leading-[20px] tracking-[0.26px] text-[#8f8f91]">
            Все права защищены и охраняются законом. 1991 - 2017 ООО "ДАФМИ".
          </div>
          <div className="flex pr-[17px]">
            <span className="mr-[9px] pt-[19px] leading-[20px] tracking-[0.2px] text-[#5b5a5f]">
              Разработка сайта:
            </span>
            <CreplaLogo />
          </div>
        </div>
      </footer>
    </div>
  );
}
